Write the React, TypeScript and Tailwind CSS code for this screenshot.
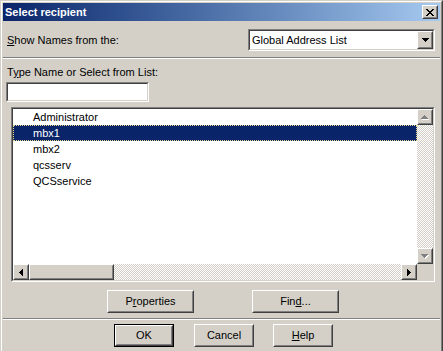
import React from "react";

type Px = [number, number, number];

function PixelIcon({ w, h, px, color, shadow }: { w: number; h: number; px: Px[]; color: string; shadow?: string }) {
  return (
    <svg width={w + (shadow ? 1 : 0)} height={h + (shadow ? 1 : 0)} shapeRendering="crispEdges">
      {shadow &&
        px.map(([x, y, len], i) => <rect key={"s" + i} x={x + 1} y={y + 1} width={len} height={1} fill={shadow} />)}
      {px.map(([x, y, len], i) => (
        <rect key={i} x={x} y={y} width={len} height={1} fill={color} />
      ))}
    </svg>
  );
}

const UP: Px[] = [[3, 0, 1], [2, 1, 3], [1, 2, 5], [0, 3, 7]];
const DOWN: Px[] = [[0, 0, 7], [1, 1, 5], [2, 2, 3], [3, 3, 1]];
const LEFT: Px[] = [[3, 0, 1], [2, 1, 2], [1, 2, 3], [0, 3, 4], [1, 4, 3], [2, 5, 2], [3, 6, 1]];
const RIGHT: Px[] = [[0, 0, 1], [0, 1, 2], [0, 2, 3], [0, 3, 4], [0, 4, 3], [0, 5, 2], [0, 6, 1]];
const CLOSE: Px[] = [
  [0, 0, 2], [6, 0, 2],
  [1, 1, 2], [5, 1, 2],
  [2, 2, 4],
  [3, 3, 2],
  [2, 4, 4],
  [1, 5, 2], [5, 5, 2],
  [0, 6, 2], [6, 6, 2],
];

function Raised({ className, children }: { className?: string; children?: React.ReactNode }) {
  return (
    <div
      className={`border border-t-white border-l-white border-r-[#404040] border-b-[#404040] bg-[#d4d0c8] ${className ?? ""}`}
    >
      <div className="w-full h-full border border-t-[#d4d0c8] border-l-[#d4d0c8] border-r-[#808080] border-b-[#808080] flex items-center justify-center">
        {children}
      </div>
    </div>
  );
}

function Sunken({ className, children }: { className?: string; children?: React.ReactNode }) {
  return (
    <div className={`border border-t-[#808080] border-l-[#808080] border-r-white border-b-white ${className ?? ""}`}>
      <div className="w-full h-full border border-t-[#404040] border-l-[#404040] border-r-[#d4d0c8] border-b-[#d4d0c8]">
        {children}
      </div>
    </div>
  );
}

const items = ["Administrator", "mbx1", "mbx2", "qcsserv", "QCSservice"];

export default function App() {
  return (
    <div className="w-[443px] h-[351px] overflow-hidden font-['Liberation_Sans',Arial,sans-serif] text-[11px] text-black">
      <div className="w-[443px] h-[356px] bg-[#d4d0c8] border border-t-[#d4d0c8] border-l-[#d4d0c8] border-r-[#404040] border-b-[#404040]">
        <div className="w-full h-full border border-t-white border-l-white border-r-[#808080] border-b-[#808080] p-px flex flex-col">
          {/* Title bar */}
          <div className="h-[18px] flex items-center justify-between bg-linear-to-r from-[#0a246a] to-[#a6caf0] pl-[2px] pr-[2px]">
            <span className="text-white font-bold text-[11px] leading-none">Select recipient</span>
            <Raised className="w-[16px] h-[14px]">
              <PixelIcon w={8} h={7} px={CLOSE} color="#000" />
            </Raised>
          </div>

          {/* Show names row */}
          <div className="mt-[8px] h-[22px] flex items-center justify-between pl-[4px] pr-[5px]">
            <span className="leading-[13px]">
              <span className="underline">S</span>how Names from the:
            </span>
            <Sunken className="w-[187px] h-[22px]">
              <div className="w-full h-full bg-white flex items-center justify-between">
                <span className="pl-[2px] leading-[13px]">Global Address List</span>
                <Raised className="w-[16px] h-[18px]">
                  <PixelIcon w={7} h={4} px={DOWN} color="#000" />
                </Raised>
              </div>
            </Sunken>
          </div>

          {/* separator */}
          <div className="mt-[6px] h-[2px] border-t border-t-[#808080] border-b border-b-white" />

          <div className="mt-[7px] pl-[4px] leading-[13px]">
            T<span className="underline">y</span>pe Name or Select from List:
          </div>
          <Sunken className="mt-[3px] ml-[3px] w-[143px] h-[20px]">
            <div className="w-full h-full bg-white" />
          </Sunken>

          {/* List box */}
          <Sunken className="mt-[5px] ml-[8px] w-[424px] h-[175px]">
            <div className="w-full h-full grid grid-cols-[1fr_16px] grid-rows-[1fr_16px] bg-white">
              <div className="flex flex-col">
                {items.map((it) => (
                  <div
                    key={it}
                    className={
                      it === "mbx1"
                        ? "h-[16px] leading-[14px] pl-[19px] bg-[#0a246a] text-white border border-dotted border-[#e8d88a]"
                        : "h-[16px] leading-[16px] pl-[20px]"
                    }
                  >
                    {it}
                  </div>
                ))}
              </div>
              <div className="flex flex-col">
                <Raised className="w-[16px] h-[16px] shrink-0">
                  <PixelIcon w={7} h={4} px={UP} color="#808080" shadow="#ffffff" />
                </Raised>
                <div className="flex-1 bg-[image:repeating-conic-gradient(#d4d0c8_0%_25%,#ffffff_0%_50%)] bg-[length:2px_2px]" />
                <Raised className="w-[16px] h-[16px] shrink-0">
                  <PixelIcon w={7} h={4} px={DOWN} color="#808080" shadow="#ffffff" />
                </Raised>
              </div>
              <div className="flex">
                <Raised className="w-[16px] h-[16px] shrink-0">
                  <PixelIcon w={4} h={7} px={LEFT} color="#000" />
                </Raised>
                <Raised className="w-[85px] h-[16px] shrink-0" />
                <div className="flex-1 bg-[image:repeating-conic-gradient(#d4d0c8_0%_25%,#ffffff_0%_50%)] bg-[length:2px_2px]" />
                <Raised className="w-[16px] h-[16px] shrink-0">
                  <PixelIcon w={4} h={7} px={RIGHT} color="#000" />
                </Raised>
              </div>
              <div className="bg-[#d4d0c8]" />
            </div>
          </Sunken>

          {/* Properties / Find */}
          <div className="mt-[8px] flex pl-[104px] gap-[58px]">
            <Raised className="w-[87px] h-[23px]">
              <span>
                P<span className="underline">r</span>operties
              </span>
            </Raised>
            <Raised className="w-[87px] h-[23px]">
              <span>
                Fin<span className="underline">d</span>...
              </span>
            </Raised>
          </div>

          <div className="mt-[5px] h-[2px] border-t border-t-[#808080] border-b border-b-white" />

          <div className="mt-[4px] flex pl-[111px]">
            <div className="w-[60px] h-[23px] border border-black">
              <Raised className="w-full h-full">
                <span>OK</span>
              </Raised>
            </div>
            <Raised className="ml-[20px] w-[60px] h-[23px]">
              <span>Cancel</span>
            </Raised>
            <Raised className="ml-[19px] w-[60px] h-[23px]">
              <span>
                <span className="underline">H</span>elp
              </span>
            </Raised>
          </div>
        </div>
      </div>
    </div>
  );
}
